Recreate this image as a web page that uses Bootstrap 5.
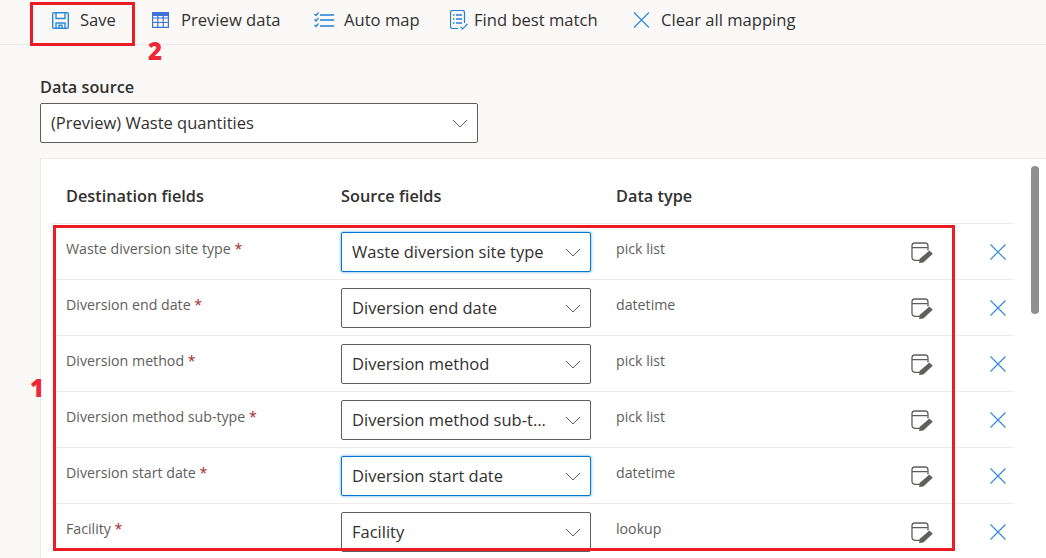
<!DOCTYPE html>
<html lang="en">
<head>
    <meta charset="UTF-8">
    <meta name="viewport" content="width=device-width, initial-scale=1.0">
    <title>Data mapping</title>
    <link href="https://cdn.jsdelivr.net/npm/bootstrap@5.3.3/dist/css/bootstrap.min.css" rel="stylesheet">
    <style>
        html, body { height: 558px; overflow: hidden; }
        body { background: #faf9f8; color: #323130; font-family: "Open Sans", "Liberation Sans", sans-serif; position: relative; }
        .cmd-bar { height: 45px; border-bottom: 1px solid #edebe9; padding: 0 0 3px 52px; }
        .cmd-item { font-size: 16.6px; color: #323130; white-space: nowrap; }
        .cmd-item svg { flex: none; color: #2b88d8; }
        .cmd-save { width: 100px; gap: 11px; }
        .cmd-preview { width: 162px; gap: 12px; }
        .cmd-auto { width: 136px; gap: 10px; }
        .cmd-find { width: 182px; gap: 6px; }
        .cmd-clear { gap: 10px; }
        .source-wrap { padding: 31px 0 15px 40px; }
        .source-label { font-size: 16.3px; font-weight: 600; line-height: 22px; margin-bottom: 5px; }
        .map-select.form-select {
            color: #323130; font-size: 16.5px; height: 40px; padding: 0 42px 0 10px;
            border: 1px solid #605e5c; border-radius: 2px; box-shadow: none; line-height: 38px; text-overflow: ellipsis;
            background-image: url("data:image/svg+xml,%3csvg xmlns='http://www.w3.org/2000/svg' viewBox='0 0 16 9'%3e%3cpath fill='none' stroke='%23605e5c' d='M1 1l7 7 7-7'/%3e%3c/svg%3e");
            background-size: 16px 9px; background-position: right 9px center;
        }
        .source-select { width: 438px; }
        .map-panel { margin-left: 40px; background: #fff; border: 1px solid #edebe9; border-right: 0; padding: 0 33px 0 10px; height: 420px; }
        .map-head { height: 65px; font-size: 16.3px; font-weight: 600; padding-top: 25px; line-height: 24px; border-bottom: 1px solid #edebe9; }
        .map-row { height: 56px; border-bottom: 1px solid #edebe9; font-size: 14.2px; color: #605e5c; }
        .col-dest { width: 290px; padding-left: 15px; }
        .col-src { width: 250px; margin-right: 25px; }
        .col-type { width: 295px; }
        .col-edit { width: 79px; }
        .map-row .col-dest, .map-row .col-type { padding-top: 15px; line-height: 20px; }
        .map-row .col-src { padding-top: 8px; }
        .map-row .col-edit { padding-top: 18px; color: #605e5c; }
        .map-row .col-del { padding-top: 20px; color: #2b88d8; }
        .req { color: #a4262c; }
        .map-select.is-active { border: 1px solid #0078d4; box-shadow: 0 0 3px rgba(0, 120, 212, .7); }
        .panel-scroll { position: absolute; left: 1031px; top: 166px; width: 8px; height: 148px; border-radius: 4px; background: #8f8f8f; }
        .note-box { position: absolute; border: 3px solid #ed1c24; pointer-events: none; }
        .note-save { left: 30px; top: 2px; width: 105px; height: 44px; }
        .note-rows { left: 53px; top: 225px; width: 902px; height: 326px; }
        .note-num { position: absolute; color: #ed2939; font-family: "Open Sans", sans-serif; font-weight: 800; font-size: 24px; line-height: 1; }
        .note-one { left: 30px; top: 376px; }
        .note-two { left: 148px; top: 39px; }
    </style>
</head>
<body>
    <svg width="0" height="0" class="position-absolute">
        <symbol id="ic-x" viewBox="0 0 16 16"><path fill="none" stroke="currentColor" stroke-width="1.1" d="M.5.5l15 15M15.500.5l-15 15"/></symbol>
        <symbol id="ic-edit" viewBox="0 0 22 21">
            <path fill="none" stroke="currentColor" stroke-width="1.3" d="M9 18.300H4a3 3 0 0 1-3-3V4a3 3 0 0 1 3-3h10a3 3 0 0 1 3 3v4.500M1 5.700h16"/>
            <path fill="currentColor" d="M18.500 8.500l3.300 3.300-9.500 8.700-4.300 .5 .8-4.300z"/>
        </symbol>
    </svg>

    <div class="cmd-bar d-flex align-items-center">
        <div class="cmd-item cmd-save d-flex align-items-center">
            <svg width="17" height="17" viewBox="0 0 17 17" fill="none" stroke="currentColor" stroke-width="1.400"><path d="M2 .7h13a1.300 1.300 0 0 1 1.300 1.300v13a1.300 1.300 0 0 1-1.300 1.300H2a1.300 1.300 0 0 1-1.300-1.300V2A1.300 1.300 0 0 1 2 .7z"/><path d="M4 .7v5.800h9V.7M4 16.300v-5.300h9v5.300M7 16.300v-3h3v3"/></svg>
            <span>Save</span>
        </div>
        <div class="cmd-item cmd-preview d-flex align-items-center">
            <svg width="17" height="16" viewBox="0 0 17 16" fill="none" stroke="#3f74d6" stroke-width="1.200"><path d="M.6.600h15.800v14.800H.600zM.6 6h15.800M.6 10.500h15.800M5.800 4v11M11.200 4v11"/><path stroke-width="3" d="M.6 2.500h15.800"/></svg>
            <span>Preview data</span>
        </div>
        <div class="cmd-item cmd-auto d-flex align-items-center">
            <svg width="20" height="16" viewBox="0 0 20 16" fill="none" stroke="#1f7fd8"><path stroke-width="1.500" d="M6 3h14M6 8h14M6 14h14"/><path stroke-width="1.200" d="M.5 2l1.500 1.500 2.500-3M.5 7.500l1.500 1.500 2.500-3M.5 13l1.500 1.500 2.500-3"/></svg>
            <span>Auto map</span>
        </div>
        <div class="cmd-item cmd-find d-flex align-items-center">
            <svg width="18" height="20" viewBox="0 0 18 20" fill="none" stroke="#1f7fd8" stroke-width="1.200"><path d="M8 18.500H2.500a2 2 0 0 1-2-2v-14a2 2 0 0 1 2-2h10a2 2 0 0 1 2 2v10.500"/><path stroke-width="1.400" d="M6 5h6M6 9h6M6 13h6M3 5h1.500M3 9h1.500M3 13h1.500"/><path stroke="#2b88d8" d="M10.500 17l2 2 5-5"/></svg>
            <span>Find best match</span>
        </div>
        <div class="cmd-item cmd-clear d-flex align-items-center">
            <svg width="19" height="16"><use href="#ic-x"/></svg>
            <span>Clear all mapping</span>
        </div>
    </div>

    <div class="source-wrap">
        <div class="source-label">Data source</div>
        <select class="form-select map-select source-select"><option>(Preview) Waste quantities</option></select>
    </div>

    <div class="map-panel" id="panel">
        <div class="map-head d-flex">
            <div class="col-dest">Destination fields</div>
            <div class="col-src">Source fields</div>
            <div class="col-type">Data type</div>
        </div>
    </div>
    <div class="panel-scroll"></div>

    <div class="note-box note-save"></div>
    <div class="note-box note-rows"></div>
    <div class="note-num note-one">1</div>
    <div class="note-num note-two">2</div>

    <script>
        const rows = [
            ['Waste diversion site type', 'pick list', true],
            ['Diversion end date', 'datetime', false],
            ['Diversion method', 'pick list', false],
            ['Diversion method sub-type', 'pick list', false],
            ['Diversion start date', 'datetime', true],
            ['Facility', 'lookup', false]
        ];

        document.getElementById('panel').insertAdjacentHTML('beforeend', rows.map(([name, type, active]) => `
            <div class="map-row d-flex">
                <div class="col-dest">${name} <span class="req">*</span></div>
                <div class="col-src"><select class="form-select map-select ${active ? 'is-active' : ''}"><option>${name}</option></select></div>
                <div class="col-type">${type}</div>
                <div class="col-edit"><svg class="d-block" width="22" height="21"><use href="#ic-edit"/></svg></div>
                <div class="col-del"><svg class="d-block" width="16" height="16"><use href="#ic-x"/></svg></div>
            </div>
        `).join(''));
    </script>
    <script src="https://cdn.jsdelivr.net/npm/bootstrap@5.3.3/dist/js/bootstrap.bundle.min.js"></script>
</body>
</html>
